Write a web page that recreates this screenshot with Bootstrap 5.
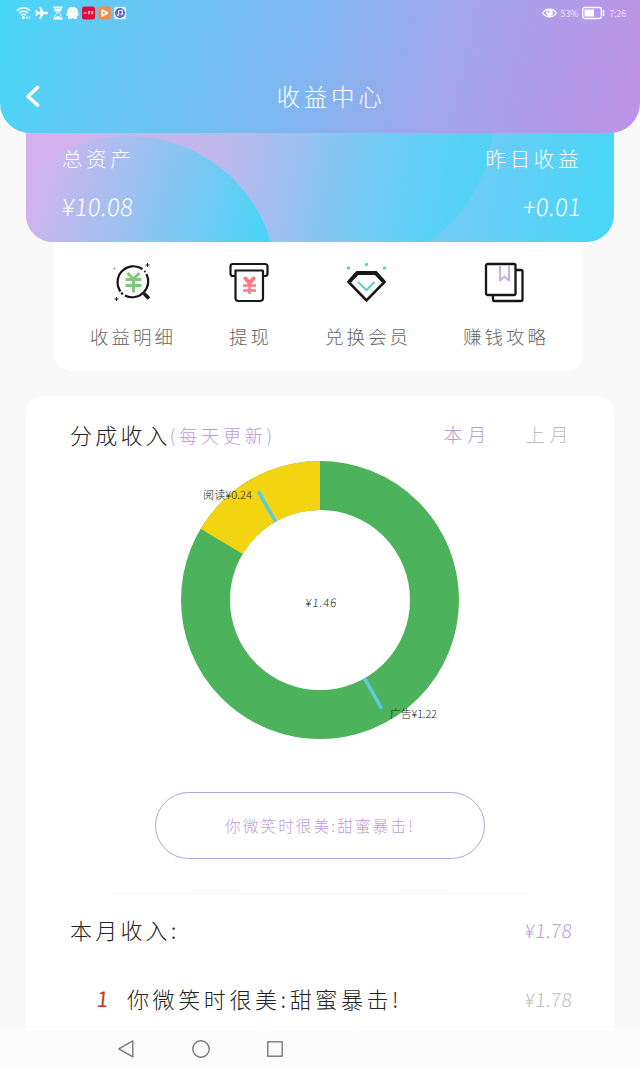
<!DOCTYPE html>
<html lang="zh-CN">
<head>
<meta charset="utf-8">
<meta name="viewport" content="width=device-width, initial-scale=1">
<title>收益中心</title>
<link href="https://cdn.jsdelivr.net/npm/bootstrap@5.3.0/dist/css/bootstrap.min.css" rel="stylesheet">
<style>
  body { width: 640px; height: 1066px; background: #f9f9f9; font-family: "Noto Sans CJK SC", sans-serif; font-weight: 300; overflow: hidden; }
  svg { display: block; flex: none; }
  .top-area { height: 133px; z-index: 2; border-radius: 0 0 30px 30px; background: linear-gradient(103deg, #47d7f8 0%, #5fcaf5 14%, #82b5ef 49%, #a3a5ea 70%, #bf92e6 100%); }
  .status-row { height: 26px; padding: 0 14px 0 16px; }
  .status-left { gap: 2.8px; }
  .status-right { gap: 4px; }
  .status-text { font-size: 9px; line-height: 26px; padding-top: 2px; }
  .title-row { height: 56px; margin-top: 42px; padding: 0 24px; }
  .page-title { font-size: 23.5px; letter-spacing: 3.8px; font-weight: 300; margin-right: -4px; }
  .asset-card { width: 588px; height: 139px; margin-top: -30px; border-radius: 0 0 27px 27px; z-index: 1; padding: 37px 33px 0 36px; }
  .asset-label { font-size: 20.5px; letter-spacing: 3.6px; line-height: 36px; margin-right: -1px; }
  .asset-value { font-size: 24px; line-height: 36px; margin-top: 12px; letter-spacing: .2px; }
  .slanted { display: inline-block; transform: skewX(-6deg); }
  .menu-card { width: 529px; height: 129px; margin-left: 54px; border-radius: 0 0 18px 18px; padding: 19px 37px 0 36px; }
  .menu-label { font-size: 18.5px; letter-spacing: 3px; line-height: 30px; color: #666; margin-top: 18px; margin-right: -3px; }
  .income-card { width: 588px; height: 635px; margin-top: 25px; border-radius: 18px 18px 0 0; }
  .head-row { height: 46px; padding: 0 43px 0 44px; margin-top: 15px; margin-bottom: 2px; }
  .big-text { font-size: 22px; letter-spacing: 3.2px; color: #222; }
  .note-text { font-size: 18px; letter-spacing: 3.8px; margin-left: -1px; padding-top: 2px; }
  .month-tab { font-size: 19px; letter-spacing: 4.6px; }
  .last-month { margin-left: 35px; margin-right: -2px; }
  .lilac { color: #bd9bd8; }
  .soft-grey { color: #bdbdbd; }
  .pill-btn { width: 330px; height: 67px; border: 1.5px solid #b9a1d5; border-radius: 34px; font-size: 15.5px; letter-spacing: 2.2px; font-weight: 300; margin-top: 47px; padding-top: 2px; }
  .fade-line { height: 1px; width: 420px; margin-top: 34px; background: linear-gradient(90deg, #fafafa, #f3f3f3 50%, #fafafa); }
  .sum-row { height: 50px; margin-top: 10px; padding: 0 42px 0 44px; }
  .item-row { height: 50px; margin-top: 19px; padding: 0 42px 0 71px; }
  .item-row .big-text { letter-spacing: 3.6px; }
  .money { font-size: 19px; letter-spacing: .4px; padding-top: 2px; }
  .rank { width: 30px; font-size: 21px; padding-top: 2px; color: #c23a22; font-weight: 400; }
  .nav-area { height: 35px; background: #fbfbfb; padding-left: 117px; gap: 57px; }
</style>
</head>
<body class="d-flex flex-column">
<header class="top-area position-relative text-white flex-shrink-0">
  <div class="status-row d-flex align-items-center justify-content-between">
    <div class="status-left d-flex align-items-center">
      <svg width="16" height="14" viewBox="0 0 16 14" fill="none" stroke="#fff" stroke-width="1.500"><path d="M.8 4.600C4.600 .9 10.600 .9 14 4.600M2.900 7C5.600 4.600 9.400 4.600 12 7M5 9.400C6.600 8 8.400 8 9.800 9.400"/><circle cx="7.400" cy="11.500" r=".8" fill="#fff"/><path d="M10.800 10.500v2.500M13.400 10.500v2.500" stroke-width="1.200"/></svg>
      <svg width="14" height="14" viewBox="0 0 14 14" fill="#fff"><path d="M13 7c0-.8-.6-1.300-1.400-1.300H8.600L5.700 1H4.400l1.100 4.700H3L1.800 4.300H.3L1.200 7 .3 9.700h1.500L3 8.300h2.500L4.400 13h1.300l2.900-4.700h3c.8 0 1.400-.5 1.400-1.300z"/></svg>
      <svg width="12" height="14" viewBox="0 0 12 14"><path d="M1.500 1.300h9M1.500 12.700h9" stroke="#fff" stroke-width="1.500"/><path d="M2.500 2h7c0 3-1.500 4-2.700 5 1.200 1 2.700 2 2.700 5h-7c0-3 1.500-4 2.700-5C4 6 2.500 5 2.500 2z" fill="none" stroke="#fff"/><path d="M3 3h6L6 6.700zM3.500 11.800L6 9.400l2.500 2.400z" fill="#fff"/></svg>
      <svg width="13" height="14" viewBox="0 0 13 14"><path d="M6.500 1C3.200 1 1 3.100 1 6c0 1-.7 2.600-.6 4 .5.300 1-.1 1.400-.6l.6 1.500-.8 1.400c1 .8 3.300.8 4.100 0h1.600c.8.800 3.100.8 4.100 0l-.8-1.400.6-1.500c.4.500.9.900 1.400.6.100-1.400-.6-3-.6-4 0-2.900-2.200-5-5.500-5z" fill="#fff"/><path d="M5 4v1.500M8 4v1.500" stroke="#9bdcf6" stroke-width=".8"/></svg>
      <svg width="13" height="14" viewBox="0 0 13 14"><rect y=".5" width="13" height="13" rx="2.500" fill="#e60b36"/><path d="M1.500 7H5M6 5.500h2.200M6 7h2M7 5.500v3M9 5.700h2.500M9 7.200h2M10.200 5v3.500" stroke="#fff" stroke-width=".8"/></svg>
      <svg width="13" height="14" viewBox="0 0 13 14"><rect x=".3" y=".5" width="12.400" height="13" rx="2.500" fill="#f68c48"/><path d="M4 4v6l5.500-3z" fill="#f68c48" stroke="#fff" stroke-width="1.600" stroke-linejoin="round"/></svg>
      <svg width="12" height="14" viewBox="0 0 12 14"><rect y=".8" width="12" height="12.400" rx="2.500" fill="#eaf1fc"/><circle cx="6" cy="7" r="5" fill="#5b64c9"/><path d="M4.700 9V4.800L8.300 4v4.300" fill="none" stroke="#fff"/><circle cx="4" cy="9" r="1" fill="#fff"/><circle cx="7.600" cy="8.300" r="1" fill="#fff"/></svg>
    </div>
    <div class="status-right d-flex align-items-center">
      <svg width="15" height="12" viewBox="0 0 15 12"><path d="M.8 6C3.500 1 11.500 1 14.200 6 11.500 11 3.500 11 .8 6z" fill="none" stroke="#fff" stroke-width="1.300"/><circle cx="7.500" cy="5.800" r="3.300" fill="#fff"/><circle cx="6.500" cy="4.700" r="1" fill="#a9b0ec"/></svg>
      <span class="status-text">53%</span>
      <svg width="23" height="14" viewBox="0 0 23 14"><rect x=".8" y="1.500" width="18.500" height="11" rx="2" fill="none" stroke="#fff" stroke-width="1.300"/><rect x="2.500" y="3.500" width="9.500" height="7" fill="#fff"/><path d="M21.500 4v6" stroke="#fff" stroke-width="1.500"/></svg>
      <span class="status-text">7:26</span>
    </div>
  </div>
  <div class="title-row d-flex align-items-center">
    <svg width="18" height="24" viewBox="0 0 18 24"><path d="M13.500 3.500L4 12.500l9.500 8.500" fill="none" stroke="#fff" stroke-width="3.600" stroke-linecap="round" stroke-linejoin="round"/></svg>
    <h1 class="page-title flex-grow-1 text-center mb-0">收益中心</h1>
  </div>
</header>

<section class="asset-card position-relative overflow-hidden mx-auto text-white flex-shrink-0">
  <svg class="position-absolute top-0 start-0" width="588" height="139" viewBox="26 103 588 139">
    <defs>
      <linearGradient id="base" gradientUnits="userSpaceOnUse" x1="60" y1="103" x2="600" y2="190"><stop offset="0" stop-color="#d3b1ed"/><stop offset=".3" stop-color="#bfb7ed"/><stop offset=".45" stop-color="#9ac1f1"/><stop offset=".6" stop-color="#82c8f3"/><stop offset=".8" stop-color="#68cdf5"/><stop offset="1" stop-color="#4bd5f7"/></linearGradient>
      <linearGradient id="leftDisc" gradientUnits="userSpaceOnUse" x1="40" y1="165" x2="262" y2="228"><stop offset="0" stop-color="#d0b3ee"/><stop offset=".36" stop-color="#a4bff0"/><stop offset=".65" stop-color="#7dc8f3"/><stop offset="1" stop-color="#4cd3f6"/></linearGradient>
      <linearGradient id="midDisc" gradientUnits="userSpaceOnUse" x1="310" y1="120" x2="480" y2="160"><stop offset="0" stop-color="#4cd3f6" stop-opacity="0"/><stop offset="1" stop-color="#4cd3f6" stop-opacity=".75"/></linearGradient>
    </defs>
    <rect x="26" y="103" width="588" height="139" fill="url(#base)"/>
    <circle cx="345" cy="120" r="148" fill="url(#midDisc)"/>
    <circle cx="129" cy="284" r="148" fill="url(#leftDisc)"/>
  </svg>
  <div class="position-relative d-flex justify-content-between">
    <div><div class="asset-label">总资产</div><div class="asset-value"><span class="slanted">¥10.08</span></div></div>
    <div class="text-end"><div class="asset-label">昨日收益</div><div class="asset-value"><span class="slanted">+0.01</span></div></div>
  </div>
</section>

<section class="menu-card bg-white d-flex justify-content-between flex-shrink-0">
  <div class="d-flex flex-column align-items-center">
    <svg width="42" height="42" viewBox="0 0 42 42" fill="none" stroke="#171717" stroke-width="2.200"><path d="M31.500 8A16 16 0 0 0 9.500 30.500M14 34.500a16 16 0 0 0 21.500-21.500"/><path d="M33 32.500l5 5" stroke-width="3.500"/><circle cx="34" cy="10.500" r="1" fill="#171717" stroke="none"/><circle cx="11" cy="32.500" r="1.200" fill="#171717" stroke="none"/><path d="M16.500 12l6 6 6-6M14.500 18.500h16M14.500 24.500h16M22.500 18v13.500" stroke="#7fc77d" stroke-width="3"/><path d="M36.500 2v4M34.500 4h4M5.500 36v4M3.500 38h4" stroke-width="1"/><path d="M3.500 6v3M2 7.500h3" stroke="#bbb" stroke-width="1"/></svg>
    <div class="menu-label">收益明细</div>
  </div>
  <div class="d-flex flex-column align-items-center">
    <svg width="42" height="42" viewBox="0 0 42 42" fill="none" stroke="#171717" stroke-width="2.200" stroke-linejoin="round"><path d="M7 15H5q-2.500 0-2.500-2.500V5.500Q2.500 3 5 3H37q2.500 0 2.500 2.500V12.500Q39.500 15 37 15H35M6.500 9.500h29M7.500 9.500V37q0 3 3 3h21.500q3 0 3-3V9.500"/><path d="M21.500 22v11M15 24.500h13M15 29.500h13" stroke="#fa7b82" stroke-width="2.400"/><path d="M21.500 22l-4-4.500M21.500 22l4-4.500" stroke="#fa7b82" stroke-width="4" stroke-linecap="round"/></svg>
    <div class="menu-label">提现</div>
  </div>
  <div class="d-flex flex-column align-items-center">
    <svg width="42" height="42" viewBox="0 0 42 42" fill="none" stroke="#171717"><path d="M12 11.500H31L39.500 21 21.500 39.500 3.500 21z" stroke-width="2.600"/><path d="M4.500 20.500L12.500 12h18l8 8.500" stroke-width="3.800"/><path d="M13 21l8.500 8 8-8" stroke="#65c9de" stroke-width="2"/><g fill="#65c9de" stroke="none"><circle cx="3.500" cy="7" r="1.800"/><circle cx="21.500" cy="3.500" r="1.800"/><circle cx="39.500" cy="7" r="1.800"/></g></svg>
    <div class="menu-label">兑换会员</div>
  </div>
  <div class="d-flex flex-column align-items-center">
    <svg width="42" height="42" viewBox="0 0 42 42" fill="none" stroke="#171717" stroke-width="2.300" stroke-linejoin="round"><rect x="3" y="3" width="29.500" height="31" rx="1.500"/><path d="M33 9h5q1.500 0 1.500 1.500V38.500q0 1.500-1.500 1.500H11.500Q10 40 10 38.500V34.500"/><path d="M17 5v14.500l4.500-4 4.500 4V5" stroke="#c9b0e2" stroke-width="2"/></svg>
    <div class="menu-label">赚钱攻略</div>
  </div>
</section>

<main class="income-card bg-white mx-auto d-flex flex-column align-items-center flex-shrink-0">
  <div class="head-row d-flex align-items-center w-100">
    <span class="big-text">分成收入</span><span class="note-text lilac">(每天更新)</span>
    <span class="month-tab lilac ms-auto">本月</span><span class="month-tab last-month soft-grey">上月</span>
  </div>
  <svg width="278" height="286" viewBox="181 459 278 286" font-family="'Noto Sans CJK SC', sans-serif">
    <circle cx="320" cy="600" r="114.500" fill="none" stroke="#4cb35c" stroke-width="49"/>
    <path d="M320 461A139 139 0 0 0 200.600 528.800L242.700 553.900A90 90 0 0 1 320 510z" fill="#f2d410"/>
    <path d="M275.500 521.700L258.300 491.300M364.500 678.300L381.700 708.700" stroke="#5fc9dd" stroke-width="3.600"/>
    <g fill="#222"><text transform="translate(305 606.500) skewX(-6)" font-size="11.500" textLength="31">¥1.46</text>
    <text x="203" y="499" font-size="11" textLength="49" lengthAdjust="spacingAndGlyphs">阅读¥0.24</text>
    <text x="390" y="717.500" font-size="11" textLength="47" lengthAdjust="spacingAndGlyphs">广告¥1.22</text></g>
  </svg>
  <button type="button" class="pill-btn lilac bg-white flex-shrink-0">你微笑时很美:甜蜜暴击!</button>
  <div class="fade-line flex-shrink-0"></div>
  <div class="sum-row d-flex align-items-center justify-content-between w-100">
    <span class="big-text">本月收入:</span><span class="money slanted lilac">¥1.78</span>
  </div>
  <div class="item-row d-flex align-items-center w-100">
    <span class="rank slanted">1</span><span class="big-text">你微笑时很美:甜蜜暴击!</span><span class="money slanted soft-grey ms-auto">¥1.78</span>
  </div>
</main>

<nav class="nav-area d-flex align-items-center flex-shrink-0" aria-label="系统导航">
  <svg width="18" height="20" viewBox="0 0 18 20" fill="none" stroke="#777" stroke-width="1.400"><path d="M15.800 1.800v16L1.800 9.800z" stroke-linejoin="round"/></svg>
  <svg width="18" height="18" viewBox="0 0 18 18" fill="none" stroke="#777" stroke-width="1.400"><circle cx="9" cy="9" r="8.200"/></svg>
  <svg width="16" height="16" viewBox="0 0 16 16" fill="none" stroke="#777" stroke-width="1.400"><rect x=".8" y=".8" width="14.400" height="14.400"/></svg>
</nav>
<script src="https://cdn.jsdelivr.net/npm/bootstrap@5.3.0/dist/js/bootstrap.bundle.min.js"></script>
</body>
</html>
